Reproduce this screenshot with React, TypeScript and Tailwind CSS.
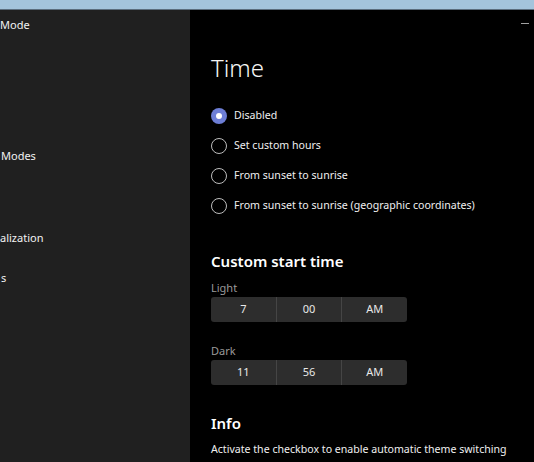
import React from "react";

const font = { fontFamily: '"Noto Sans", "Open Sans", sans-serif' };

function Radio({ checked, label }: { checked?: boolean; label: string }) {
  return (
    <div className="flex items-center h-[30px]">
      {checked ? (
        <div className="w-[16px] h-[16px] rounded-full bg-[#6d7ed6] flex items-center justify-center">
          <div className="w-[6px] h-[6px] rounded-full bg-white" />
        </div>
      ) : (
        <div className="w-[16px] h-[16px] rounded-full border border-[#bdbdbd]" />
      )}
      <span className="ml-[7px] text-[10.6px] text-[#f0f0f0]">{label}</span>
    </div>
  );
}

function Picker({ a, b, c }: { a: string; b: string; c: string }) {
  return (
    <div className="flex w-[196px] h-[25px] rounded-[3px] bg-[#2d2d2d] text-[11px] text-[#e8e8e8]">
      <div className="flex-1 flex items-center justify-center border-r border-[#454545]">{a}</div>
      <div className="flex-1 flex items-center justify-center border-r border-[#454545]">{b}</div>
      <div className="flex-1 flex items-center justify-center">{c}</div>
    </div>
  );
}

export default function App() {
  return (
    <div className="w-[534px] h-[462px] overflow-hidden flex flex-col bg-black" style={font}>
      <div className="h-[9px] bg-[#a4c4dc]" />
      <div className="h-[1px] bg-[#5c6e7e]" />
      <div className="flex flex-1">
        <div className="w-[190px] bg-[#202020] text-[11px] text-[#f2f2f2] overflow-hidden relative">
          <div className="ml-[0px] mt-[8px] leading-[14px]">Mode</div>
          <div className="mt-[117px] ml-[1px] leading-[14px]">Modes</div>
          <div className="mt-[68px] ml-[0px] leading-[14px]">alization</div>
          <div className="mt-[26px] ml-[1px] leading-[14px]">s</div>
        </div>
        <div className="flex-1 relative pl-[21px]">
          <div className="absolute right-[5px] top-[13px] w-[8px] h-[1px] bg-[#a0a0a0]" />
          <div className="mt-[42px] text-[24px] font-light text-[#f5f5f5] leading-[32px]">Time</div>
          <div className="mt-[17px] flex flex-col">
            <Radio checked label="Disabled" />
            <Radio label="Set custom hours" />
            <Radio label="From sunset to sunrise" />
            <Radio label="From sunset to sunrise (geographic coordinates)" />
          </div>
          <div className="mt-[30px] text-[15px] font-semibold text-white leading-[20px]">Custom start time</div>
          <div className="mt-[10px] text-[11px] text-[#9a9a9a] leading-[14px]">Light</div>
          <div className="mt-[2px]"><Picker a="7" b="00" c="AM" /></div>
          <div className="mt-[22px] text-[11px] text-[#9a9a9a] leading-[14px]">Dark</div>
          <div className="mt-[2px]"><Picker a="11" b="56" c="AM" /></div>
          <div className="mt-[28px] text-[15px] font-semibold text-white leading-[20px]">Info</div>
          <div className="mt-[9px] text-[10.6px] text-[#f0f0f0] leading-[14px]">Activate the checkbox to enable automatic theme switching</div>
        </div>
      </div>
    </div>
  );
}
